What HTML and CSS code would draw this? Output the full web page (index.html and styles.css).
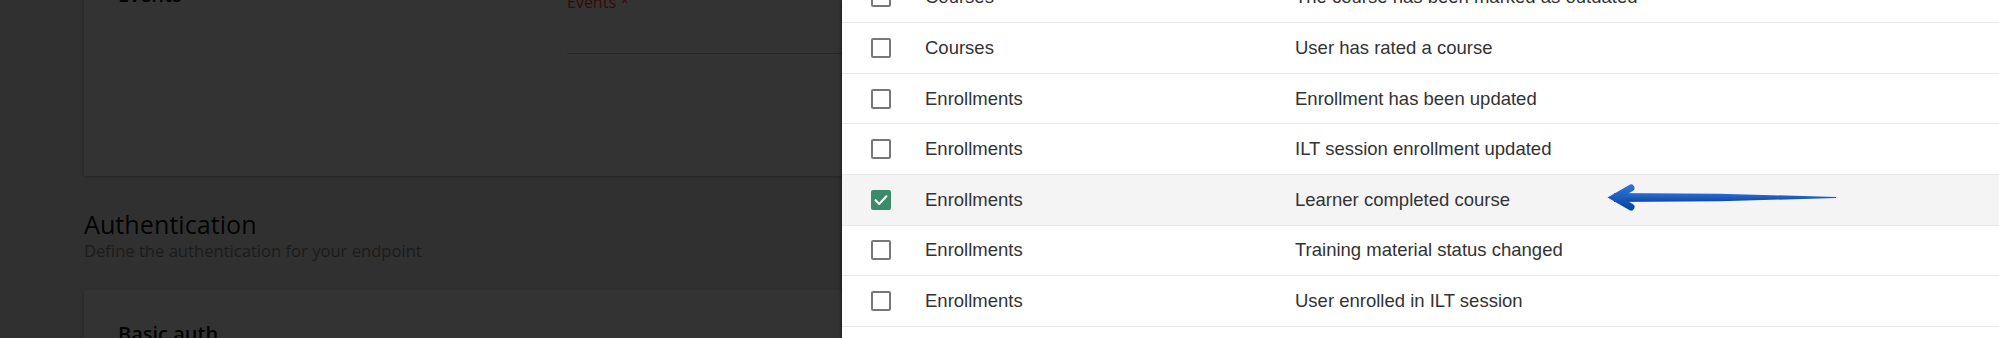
FILE: index.html
```html
<!DOCTYPE html>
<html lang="en">
<head>
<meta charset="utf-8">
<title>Webhook events</title>
<link rel="stylesheet" href="styles.css">
</head>
<body>
<main class="page">
  <section class="card card-events">
    <div class="field-row">
      <div class="field-label">Events</div>
      <div class="field-control">
        <label class="control-label">Events *</label>
        <div class="input-line"></div>
      </div>
    </div>
  </section>
  <header class="section-head">
    <h2 class="section-title">Authentication</h2>
    <p class="section-sub">Define the authentication for your endpoint</p>
  </header>
  <section class="card card-auth">
    <div class="field-label">Basic auth</div>
  </section>
</main>
<div class="backdrop"></div>
<aside class="drawer">
  <div class="event-list">
    <div class="event-row"><span class="checkbox"></span><span class="cat">Courses</span><span class="desc">The course has been marked as outdated</span></div>
    <div class="event-row"><span class="checkbox"></span><span class="cat">Courses</span><span class="desc">User has rated a course</span></div>
    <div class="event-row"><span class="checkbox"></span><span class="cat">Enrollments</span><span class="desc">Enrollment has been updated</span></div>
    <div class="event-row"><span class="checkbox"></span><span class="cat">Enrollments</span><span class="desc">ILT session enrollment updated</span></div>
    <div class="event-row is-selected"><span class="checkbox is-checked"><svg viewBox="0 0 20 20" width="20" height="20"><path d="M4.6 10.2 L8.3 13.9 L15.4 6.3" fill="none" stroke="#fff" stroke-width="2.1" stroke-linecap="round" stroke-linejoin="round"/></svg></span><span class="cat">Enrollments</span><span class="desc">Learner completed course</span></div>
    <div class="event-row"><span class="checkbox"></span><span class="cat">Enrollments</span><span class="desc">Training material status changed</span></div>
    <div class="event-row"><span class="checkbox"></span><span class="cat">Enrollments</span><span class="desc">User enrolled in ILT session</span></div>
    <div class="event-row"><span class="checkbox"></span><span class="cat">Enrollments</span><span class="desc">User unenrolled from ILT session</span></div>
  </div>
  <svg class="arrow" viewBox="0 0 240 36" width="240" height="36">
    <defs>
      <linearGradient id="ag" x1="0" y1="0" x2="0" y2="1">
        <stop offset="0" stop-color="#2c70d2"/>
        <stop offset="1" stop-color="#0c48a8"/>
      </linearGradient>
    </defs>
    <path d="M14 13 L120 13.8 L236 16.9 L236 18.1 L120 21.2 L14 22 Z" fill="url(#ag)"/>
    <polyline points="31,8 14.5,17.5 31,27" fill="none" stroke="url(#ag)" stroke-width="7" stroke-linecap="round" stroke-linejoin="miter"/>
  </svg>
</aside>
</body>
</html>
```

FILE: styles.css
```css
html, body {
  margin: 0;
  width: 1999px;
  height: 338px;
  overflow: hidden;
}
body {
  position: relative;
  background: #f0f0f0;
  font-family: "Open Sans", "Noto Sans", sans-serif;
}
.page {
  padding-left: 84px;
  width: 1300px;
}
.card {
  background: #fff;
  box-shadow: 0 1px 3px rgba(0, 0, 0, 0.3);
  padding-left: 34px;
  box-sizing: border-box;
  width: 1100px;
}
.card-events {
  margin-top: -48.8px;
  height: 224.8px;
  padding-top: 30px;
}
.field-row {
  display: grid;
  grid-template-columns: 449px 1fr;
}
.field-label {
  font-size: 20px;
  font-weight: 600;
  line-height: 28px;
  color: #111;
}
.field-control {
  padding-top: 9.6px;
}
.control-label {
  display: block;
  font-size: 16px;
  line-height: 22px;
  color: #ff3a3a;
}
.input-line {
  height: 40.2px;
  border-bottom: 1px solid #c8c8c8;
}
.section-head {
  margin-top: 31.5px;
}
.section-title {
  margin: 0;
  font-size: 25.2px;
  font-weight: 400;
  line-height: 32px;
  color: #121212;
}
.section-sub {
  margin: 0;
  font-size: 16.6px;
  line-height: 22px;
  color: #8a8a8a;
}
.card-auth {
  margin-top: 28.7px;
  padding-top: 30px;
  height: 200px;
}
.backdrop {
  position: absolute;
  inset: 0;
  background: rgba(0, 0, 0, 0.8);
}
.drawer {
  position: absolute;
  top: 0;
  right: 0;
  bottom: 0;
  left: 842px;
  background: #fff;
  box-shadow: -1px 0 3px rgba(0, 0, 0, 0.45);
  overflow: hidden;
  font-family: "Liberation Sans", Arial, sans-serif;
}
.event-list {
  margin-top: -27.33px;
}
.event-row {
  display: grid;
  grid-template-columns: 54px 370px 1fr;
  align-items: center;
  padding-left: 29px;
  height: 50.6px;
  box-sizing: border-box;
  border-bottom: 1px solid #e8e8e8;
  font-size: 18.5px;
  color: #333;
}
.event-row.is-selected {
  background: #f4f4f4;
}
.checkbox {
  display: block;
  width: 20px;
  height: 20px;
  box-sizing: border-box;
  border: 2px solid #787878;
  border-radius: 2px;
  background: #fff;
  position: relative;
}
.checkbox.is-checked {
  background: #3b8a68;
  border-color: #3b8a68;
}
.checkbox svg {
  position: absolute;
  left: -2px;
  top: -2px;
}
.arrow {
  position: absolute;
  left: 758px;
  top: 180px;
}
```
